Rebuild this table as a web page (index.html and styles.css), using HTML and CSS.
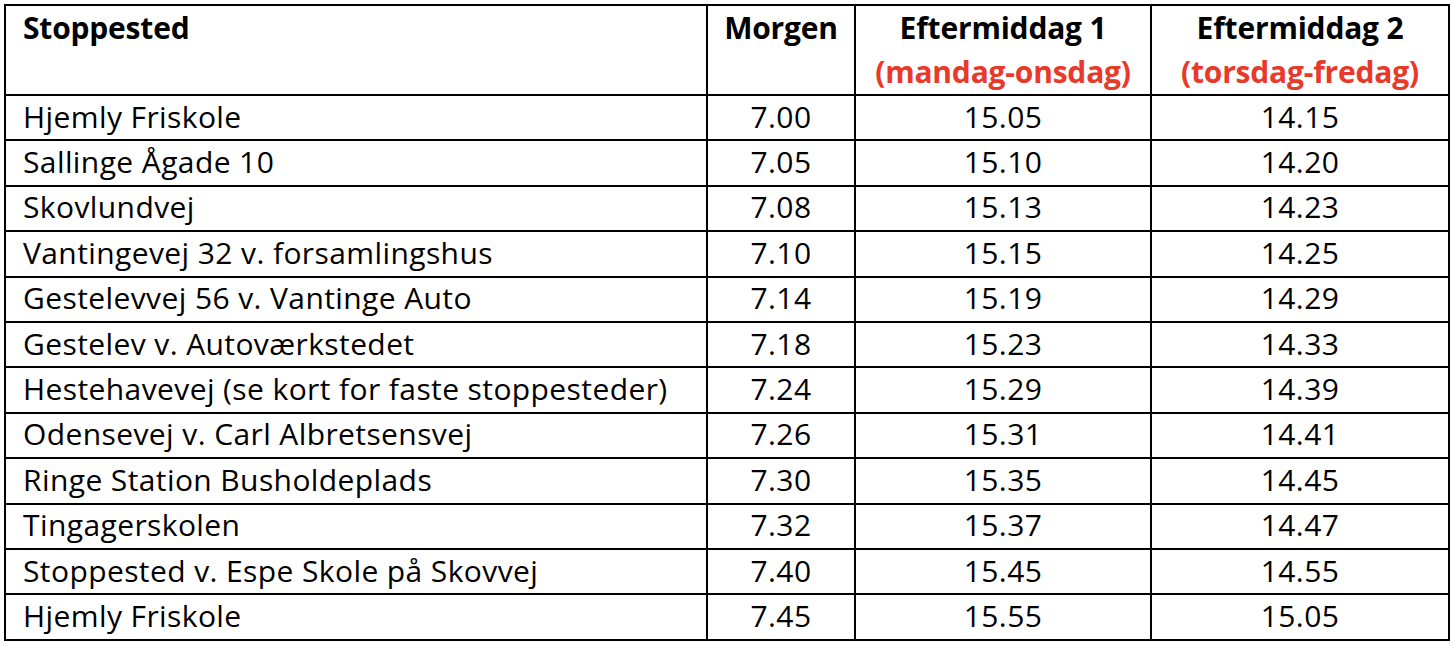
FILE: index.html
```html
<!DOCTYPE html>
<html lang="da">
<head>
<meta charset="utf-8">
<title>Køreplan</title>
<link rel="stylesheet" href="styles.css">
</head>
<body>
<table class="schedule">
  <colgroup>
    <col class="c-stop">
    <col class="c-morning">
    <col class="c-aft1">
    <col class="c-aft2">
  </colgroup>
  <thead>
    <tr class="head">
      <th class="stop">Stoppested</th>
      <th class="time">Morgen</th>
      <th class="time">Eftermiddag 1<br><span class="days">(mandag-onsdag)</span></th>
      <th class="time">Eftermiddag 2<br><span class="days">(torsdag-fredag)</span></th>
    </tr>
  </thead>
  <tbody>
    <tr><td class="stop">Hjemly Friskole</td><td class="time">7.00</td><td class="time">15.05</td><td class="time">14.15</td></tr>
    <tr><td class="stop">Sallinge Ågade 10</td><td class="time">7.05</td><td class="time">15.10</td><td class="time">14.20</td></tr>
    <tr><td class="stop">Skovlundvej</td><td class="time">7.08</td><td class="time">15.13</td><td class="time">14.23</td></tr>
    <tr><td class="stop">Vantingevej 32 v. forsamlingshus</td><td class="time">7.10</td><td class="time">15.15</td><td class="time">14.25</td></tr>
    <tr><td class="stop">Gestelevvej 56 v. Vantinge Auto</td><td class="time">7.14</td><td class="time">15.19</td><td class="time">14.29</td></tr>
    <tr><td class="stop">Gestelev v. Autoværkstedet</td><td class="time">7.18</td><td class="time">15.23</td><td class="time">14.33</td></tr>
    <tr><td class="stop">Hestehavevej (se kort for faste stoppesteder)</td><td class="time">7.24</td><td class="time">15.29</td><td class="time">14.39</td></tr>
    <tr><td class="stop">Odensevej v. Carl Albretsensvej</td><td class="time">7.26</td><td class="time">15.31</td><td class="time">14.41</td></tr>
    <tr><td class="stop">Ringe Station Busholdeplads</td><td class="time">7.30</td><td class="time">15.35</td><td class="time">14.45</td></tr>
    <tr><td class="stop">Tingagerskolen</td><td class="time">7.32</td><td class="time">15.37</td><td class="time">14.47</td></tr>
    <tr><td class="stop">Stoppested v. Espe Skole på Skovvej</td><td class="time">7.40</td><td class="time">15.45</td><td class="time">14.55</td></tr>
    <tr><td class="stop">Hjemly Friskole</td><td class="time">7.45</td><td class="time">15.55</td><td class="time">15.05</td></tr>
  </tbody>
</table>
</body>
</html>
```
FILE: styles.css
```css
html, body {
  margin: 0;
  padding: 0;
  background: #ffffff;
}

body {
  padding: 4px;
  font-family: "Open Sans", Lato, "Liberation Sans", sans-serif;
  color: #000000;
}

.schedule {
  border-collapse: collapse;
  table-layout: fixed;
  width: 1446px;
  font-size: 30px;
}

.c-stop { width: 702px; }
.c-morning { width: 148px; }
.c-aft1 { width: 296px; }
.c-aft2 { width: 298px; }

.schedule th,
.schedule td {
  border: 2px solid #000000;
  padding: 0;
}

.head th {
  height: 88px;
  vertical-align: top;
  font-weight: 700;
  line-height: 44px;
  padding-top: 0;
  letter-spacing: -0.2px;
}

.schedule tbody tr {
  height: 45.4px;
}

.schedule td {
  vertical-align: middle;
  line-height: 40px;
  letter-spacing: 0.4px;
  padding-bottom: 2px;
}

.stop {
  text-align: left;
  padding-left: 17px !important;
}

.time {
  text-align: center;
}

.days {
  color: #e8392a;
}
```
